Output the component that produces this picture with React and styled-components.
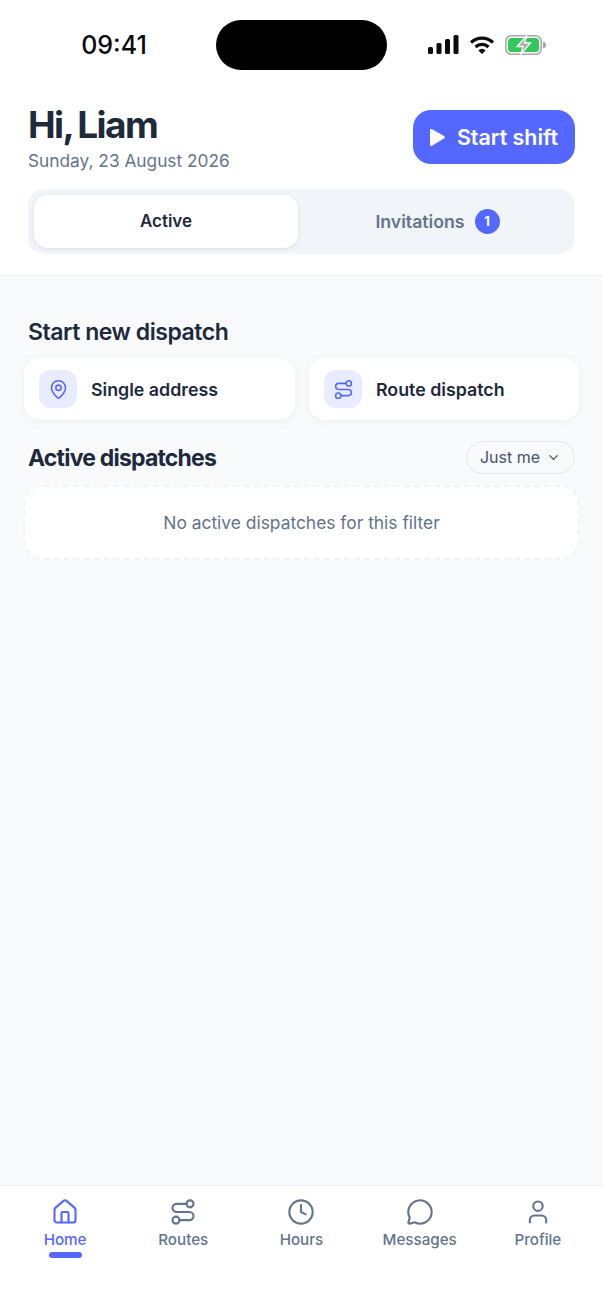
import React from 'react';
import styled, { createGlobalStyle } from 'styled-components';
import { House, Route, Clock, MessageCircle, User, MapPin, ChevronDown } from 'lucide-react';

const GlobalStyle = createGlobalStyle`
    html, body { margin: 0; padding: 0; background: #fff; }
    * { box-sizing: border-box; }
    body { font-family: Inter, "Liberation Sans", sans-serif; -webkit-font-smoothing: antialiased; }
`;

const Screen = styled.div`
    width: 603px;
    height: 1310px;
    display: flex;
    flex-direction: column;
    background: #fff;
    overflow: hidden;
`;

const StatusBar = styled.div`
    height: 89px;
    flex: none;
    display: grid;
    grid-template-columns: 216px 171px 216px;
    align-items: center;
`;

const Time = styled.div`
    padding-left: 12px;
    text-align: center;
    font-size: 25px;
    font-weight: 500;
    color: #0b0b0b;
`;

const Island = styled.div`
    height: 50px;
    background: #000;
    border-radius: 25px;
`;

const StatusIcons = styled.div`
    display: flex;
    align-items: center;
    gap: 10px;
    padding-left: 41px;
`;

const Header = styled.header`
    flex: none;
    height: 187px;
    padding: 14px 28px 0;
    background: #fff;
    border-bottom: 1px solid #eceff3;
`;

const TopRow = styled.div`
    display: flex;
    justify-content: space-between;
    align-items: flex-start;
    height: 86px;
`;

const Greeting = styled.h1`
    margin: 0;
    font-size: 37px;
    line-height: 44px;
    font-weight: 700;
    letter-spacing: -1.6px;
    word-spacing: -2px;
    color: #1e293b;
`;

const DateLine = styled.div`
    margin-top: 3px;
    font-size: 17.3px;
    line-height: 22px;
    color: #64748b;
`;

const ShiftButton = styled.button`
    margin-top: 7px;
    width: 162px;
    height: 54px;
    border: 0;
    border-radius: 18px;
    background: #5468ff;
    color: #fff;
    font: 600 21.4px Inter, sans-serif;
    display: flex;
    align-items: center;
    justify-content: center;
    gap: 12px;
`;

const Tabs = styled.div`
    height: 65px;
    padding: 6px;
    display: grid;
    grid-template-columns: 264px 1fr;
    column-gap: 8px;
    border-radius: 16px;
    background: #f1f5f9;
`;

const Tab = styled.div`
    height: 53px;
    display: flex;
    align-items: center;
    justify-content: center;
    gap: 10px;
    padding-bottom: 1px;
    border-radius: 14px;
    font-size: ${p => (p.$active ? 17 : 17.7)}px;
    font-weight: 600;
    color: ${p => (p.$active ? '#1e293b' : '#64748b')};
    background: ${p => (p.$active ? '#fff' : 'transparent')};
    box-shadow: ${p => (p.$active ? '0 1px 4px rgba(15,23,42,0.10)' : 'none')};
`;

const Badge = styled.span`
    width: 25px;
    height: 25px;
    border-radius: 50%;
    background: #5468ff;
    color: #fff;
    font-size: 13px;
    font-weight: 700;
    display: flex;
    align-items: center;
    justify-content: center;
`;

const Main = styled.main`
    flex: 1;
    background: #f8fafc;
    padding: 41px 24px 0;
`;

const SectionHead = styled.div`
    display: flex;
    align-items: center;
    justify-content: space-between;
    padding: 0 4px;
    margin-top: ${p => p.$top || 0}px;
`;

const SectionTitle = styled.h2`
    margin: 0;
    font-size: 23px;
    line-height: 30px;
    font-weight: ${p => (p.$strong ? 700 : 600)};
    letter-spacing: ${p => (p.$strong ? -0.8 : -0.45)}px;
    color: #1e293b;
`;

const ActionGrid = styled.div`
    margin-top: 11px;
    display: grid;
    grid-template-columns: 271px 270px;
    gap: 14px;
`;

const ActionCard = styled.div`
    height: 62px;
    display: flex;
    align-items: center;
    gap: 14px;
    padding-left: 15px;
    border-radius: 16px;
    background: #fff;
    box-shadow: 0 2px 8px rgba(15,23,42,0.05);
`;

const ActionIcon = styled.div`
    width: 38px;
    height: 38px;
    border-radius: 12px;
    background: #e9ecff;
    color: #5468ff;
    display: flex;
    align-items: center;
    justify-content: center;
`;

const ActionLabel = styled.span`
    font-size: 17.8px;
    font-weight: 600;
    color: #1e293b;
`;

const FilterPill = styled.div`
    width: 109px;
    height: 33px;
    display: flex;
    align-items: center;
    justify-content: center;
    gap: 6px;
    padding-bottom: 1px;
    border: 1.5px solid #e2e8f0;
    border-radius: 17px;
    font-size: 16px;
    font-weight: 400;
    color: #475569;
`;

const EmptyCard = styled.div`
    margin: 11px -1px 0;
    height: 75px;
    display: flex;
    align-items: center;
    justify-content: center;
    border: 2px dashed #f1f3f6;
    border-radius: 20px;
    background: #fff;
    font-size: 17.4px;
    color: #64748b;
`;

const BottomNav = styled.nav`
    flex: none;
    height: 125px;
    padding: 0 6px;
    display: grid;
    grid-template-columns: repeat(5, 118.2px);
    background: #fff;
    border-top: 1px solid #eceff3;
`;

const NavItem = styled.div`
    display: flex;
    flex-direction: column;
    align-items: center;
    padding-top: 12px;
    color: ${p => (p.$active ? '#5468ff' : '#64748b')};
`;

const NavLabel = styled.span`
    margin-top: 4px;
    font-size: 15.2px;
    line-height: 20px;
    font-weight: 500;
`;

const NavBar = styled.span`
    margin-top: 2px;
    width: 33px;
    height: 6px;
    border-radius: 3px;
    background: #5468ff;
`;

const Signal = () => (
    <svg width="31" height="19" viewBox="0 0 31 19" fill="#0b0b0b">
        <rect x="0" y="12" width="5" height="7" rx="1.5" />
        <rect x="8.5" y="8" width="5" height="11" rx="1.5" />
        <rect x="17" y="4" width="5" height="15" rx="1.5" />
        <rect x="25.5" y="0" width="5" height="19" rx="1.5" />
    </svg>
);

const Wifi = () => (
    <svg width="26" height="20" viewBox="0 0 26 20" fill="none" stroke="#0b0b0b" strokeWidth="3.2">
        <path d="M2 7.5a16 16 0 0 1 22 0" />
        <path d="M6.5 12a9.5 9.5 0 0 1 13 0" />
        <path d="M13 19l-3.6-3.6a5 5 0 0 1 7.2 0z" fill="#0b0b0b" stroke="none" />
    </svg>
);

const Battery = () => (
    <svg width="42" height="20" viewBox="0 0 42 20">
        <rect x="0.8" y="0.8" width="35.4" height="18.4" rx="5.5" fill="none" stroke="#a8a8a8" strokeWidth="1.6" />
        <rect x="3" y="3" width="31" height="14" rx="3.5" fill="#34c759" />
        <path d="M38 6.5c2 .5 3 1.8 3 3.5s-1 3-3 3.5z" fill="#a8a8a8" />
        <path d="M22 0.5L12 11.5h6L15.5 19.5 25.5 8h-6z" fill="#adadad" stroke="#fff" strokeWidth="1.3" />
    </svg>
);

const navItems = [
    { label: 'Home', icon: House, active: true },
    { label: 'Routes', icon: Route },
    { label: 'Hours', icon: Clock },
    { label: 'Messages', icon: MessageCircle },
    { label: 'Profile', icon: User },
];

export default function App() {
    return (
        <Screen>
            <GlobalStyle />
            <StatusBar>
                <Time>09:41</Time>
                <Island />
                <StatusIcons>
                    <Signal />
                    <Wifi />
                    <Battery />
                </StatusIcons>
            </StatusBar>
            <Header>
                <TopRow>
                    <div>
                        <Greeting>Hi, Liam</Greeting>
                        <DateLine>Sunday, 23 August 2026</DateLine>
                    </div>
                    <ShiftButton>
                        <svg width="15" height="17" viewBox="0 0 15 17" fill="#fff"><path d="M0 1.5C0 .4 1 -.2 2 .3l12 6.7c1 .6 1 2 0 2.6L2 16.7c-1 .5-2-.1-2-1.2z" /></svg>
                        Start shift
                    </ShiftButton>
                </TopRow>
                <Tabs>
                    <Tab $active>Active</Tab>
                    <Tab>Invitations <Badge>1</Badge></Tab>
                </Tabs>
            </Header>
            <Main>
                <SectionHead>
                    <SectionTitle>Start new dispatch</SectionTitle>
                </SectionHead>
                <ActionGrid>
                    <ActionCard>
                        <ActionIcon><MapPin size={21} strokeWidth={1.8} /></ActionIcon>
                        <ActionLabel>Single address</ActionLabel>
                    </ActionCard>
                    <ActionCard>
                        <ActionIcon><Route size={21} strokeWidth={1.8} /></ActionIcon>
                        <ActionLabel>Route dispatch</ActionLabel>
                    </ActionCard>
                </ActionGrid>
                <SectionHead $top={21}>
                    <SectionTitle $strong>Active dispatches</SectionTitle>
                    <FilterPill>Just me <ChevronDown size={15} /></FilterPill>
                </SectionHead>
                <EmptyCard>No active dispatches for this filter</EmptyCard>
            </Main>
            <BottomNav>
                {navItems.map(({ label, icon: Icon, active }) => (
                    <NavItem key={label} $active={active}>
                        <Icon size={28} strokeWidth={1.8} />
                        <NavLabel>{label}</NavLabel>
                        {active && <NavBar />}
                    </NavItem>
                ))}
            </BottomNav>
        </Screen>
    );
}
